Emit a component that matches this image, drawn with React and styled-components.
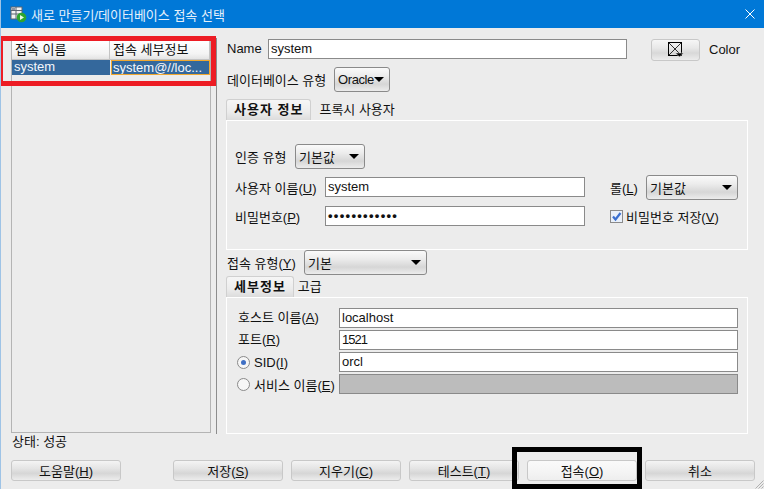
import React from "react";
import styled, { createGlobalStyle } from "styled-components";

const GlobalStyle = createGlobalStyle`
  html, body { margin: 0; padding: 0; background: #ececec; }
  body {
    font-family: "Liberation Sans", "Noto Sans CJK KR", sans-serif;
    font-size: 13px;
    color: #111;
  }
  * { box-sizing: border-box; }
`;

const Dialog = styled.div`
  position: relative;
  width: 764px;
  height: 489px;
  overflow: hidden;
  display: flex;
  flex-direction: column;
  background: #ececec;
  border-left: 1px solid #9ec3e6;
`;

const TitleBar = styled.div`
  height: 28px;
  flex: none;
  display: flex;
  align-items: center;
  background: #0078d7;
  color: #e4f0fb;
  padding: 0 9px;
`;

const TitleText = styled.span`
  flex: 1;
  margin-left: 4px;
`;

const Body = styled.div`
  flex: 1;
  display: flex;
  min-height: 0;
`;

const LeftPane = styled.div`
  width: 216px;
  flex: none;
  margin-top: 10px;
  padding: 3px 5px 0 10px;
  border-right: 1px solid #8d8d8d;
`;

const ConnTable = styled.div`
  height: 392px;
  border: 1px solid #b4b4b4;
  border-top: none;
`;

const TableRow = styled.div`
  display: grid;
  grid-template-columns: 98px 1fr;
`;

const HeadCell = styled.div`
  height: 19px;
  line-height: 18px;
  padding-left: 3px;
  background: linear-gradient(#ffffff, #f4f4f4 70%, #e4e4e4);
  border-right: 1px solid #c4c4c4;
  border-bottom: 1px solid #c4c4c4;
`;

const DataCell = styled.div`
  height: 15px;
  line-height: 14px;
  padding-left: ${({ $focused }) => ($focused ? "1px" : "2px")};
  margin-left: ${({ $focused }) => ($focused ? "1px" : "0")};
  color: #f4f7fb;
  background: #34689c;
  white-space: nowrap;
  overflow: hidden;
  border: ${({ $focused }) => ($focused ? "1px solid #f0a830" : "none")};
`;

const RightPane = styled.div`
  flex: 1;
  min-width: 0;
  padding: 11px 16px 0 9px;
  display: flex;
  flex-direction: column;
`;

const Row = styled.div`
  display: flex;
  align-items: ${({ $alignTop }) => ($alignTop ? "flex-start" : "center")};
  margin-top: ${({ $top }) => $top || 0}px;
`;

const Label = styled.span`
  flex: none;
  width: ${({ $w }) => ($w ? `${$w}px` : "auto")};
  padding-left: ${({ $pad }) => $pad || 0}px;
  padding-bottom: ${({ $lift }) => $lift || 0}px;
  line-height: ${({ $line }) => ($line ? `${$line}px` : "normal")};
  white-space: nowrap;
`;

const Key = styled.u`
  text-underline-offset: 1px;
`;

const TextField = styled.div`
  flex: none;
  width: ${({ $w }) => $w}px;
  height: 20px;
  line-height: 18px;
  padding-left: 2px;
  letter-spacing: ${({ $spacing }) => $spacing || 0}px;
  background: ${({ $disabled }) => ($disabled ? "#bcbcbc" : "#fff")};
  border: 1px solid #8a8a8a;
  white-space: nowrap;
  overflow: hidden;
`;

const Dots = styled.span`
  font-weight: 700;
  letter-spacing: 1.3px;
`;

const Select = styled.div`
  flex: none;
  width: ${({ $w }) => $w}px;
  height: 25px;
  display: flex;
  align-items: center;
  justify-content: space-between;
  padding: 0 5px 0 3px;
  letter-spacing: ${({ $spacing }) => $spacing || 0}px;
  border: 1px solid #8a8a8a;
  border-radius: 3px;
  background: linear-gradient(#fafafa, #ececec 35%, #d6d6d6 70%, #ececec);
`;

const Caret = styled.i`
  width: 0;
  height: 0;
  border-left: 5px solid transparent;
  border-right: 5px solid transparent;
  border-top: 5px solid #000;
`;

const ColorButton = styled.button`
  width: 49px;
  height: 22px;
  margin-left: 24px;
  padding: 0 0 0 1px;
  display: flex;
  align-items: center;
  justify-content: center;
  border: 1px solid #c8c8c8;
  border-radius: 3px;
  background: linear-gradient(#f6f6f6, #e8e8e8 40%, #d8d8d8 65%, #ececec);
`;

const ColorLabel = styled.span`
  margin-left: 9px;
  line-height: 22px;
`;

const TabStrip = styled.div`
  height: 21px;
  flex: none;
  display: flex;
  align-items: flex-end;
  margin-top: ${({ $top }) => $top}px;
`;

const Tab = styled.div`
  height: ${({ $active }) => ($active ? "21px" : "20px")};
  line-height: 20px;
  padding: 0 ${({ $active }) => ($active ? "7px" : 0)};
  margin-left: ${({ $gap }) => $gap || 0}px;
  letter-spacing: ${({ $active }) => ($active ? "1px" : 0)};
  font-weight: ${({ $active }) => ($active ? 700 : 400)};
  background: ${({ $active }) =>
    $active ? "linear-gradient(#f6f6f6, #ececec 60%, #dcdcdc)" : "transparent"};
  border: ${({ $active }) => ($active ? "1px solid #d0d0d0" : "none")};
  border-bottom: none;
  border-radius: 3px 3px 0 0;
  white-space: nowrap;
`;

const TabPanel = styled.div`
  border: 1px solid #fff;
  height: ${({ $h }) => ($h ? `${$h}px` : "auto")};
  flex: ${({ $h }) => ($h ? "none" : 1)};
  padding: ${({ $pad }) => $pad};
`;

const CredentialGrid = styled.div`
  display: grid;
  grid-template-columns: 90px 260px 25px 36px 92px;
  grid-template-rows: 25px 20px;
  row-gap: 6px;
  align-items: center;
  margin-top: 6px;
`;

const RowField = styled(TextField)`
  align-self: start;
  margin-top: ${({ $nudge }) => $nudge || 0}px;
`;

const CheckWrap = styled.label`
  grid-column: 4 / 6;
  display: flex;
  align-items: center;
  gap: 3px;
  white-space: nowrap;
`;

const CheckBox = styled.span`
  width: 13px;
  height: 13px;
  flex: none;
  display: flex;
  align-items: center;
  justify-content: center;
  border: 1px solid #8a8a8a;
  background: #e9f0fa;
`;

const HostGrid = styled.div`
  display: grid;
  grid-template-columns: 102px 399px;
  grid-auto-rows: 20px;
  row-gap: 2px;
  align-items: center;
`;

const RadioLabel = styled.span`
  display: flex;
  align-items: center;
  gap: 4px;
  white-space: nowrap;
`;

const Radio = styled.span`
  width: 13px;
  height: 13px;
  flex: none;
  border-radius: 50%;
  border: 1px solid #8a8a8a;
  background: #f6f6f6;
  display: flex;
  align-items: center;
  justify-content: center;
`;

const RadioDot = styled.span`
  width: 5px;
  height: 5px;
  border-radius: 50%;
  background: #3f6fc4;
`;

const Footer = styled.div`
  height: 55px;
  flex: none;
  padding: 1px 9px 0 10px;
`;

const Status = styled.div`
  height: 16px;
  line-height: 14px;
  padding-left: 1px;
`;

const ButtonRow = styled.div`
  display: flex;
  gap: 8px;
  margin-top: 9px;
`;

const ActionButton = styled.button`
  width: 110px;
  height: 21px;
  padding: 0;
  font: inherit;
  color: #111;
  margin-left: ${({ $gapLeft }) => $gapLeft || 0}px;
  border: 1px solid #c8c8c8;
  border-radius: 3px;
  background: ${({ $hot }) =>
    $hot
      ? "linear-gradient(#fafafa, #f4f4f4 60%, #eeeeee)"
      : "linear-gradient(#f4f4f4, #e4e4e4 40%, #d6d6d6 65%, #ececec)"};
`;

const Callout = styled.div`
  position: absolute;
  left: ${({ $x }) => $x}px;
  top: ${({ $y }) => $y}px;
  width: ${({ $w }) => $w}px;
  height: ${({ $h }) => $h}px;
  border: 5px solid ${({ $color }) => $color};
  border-left-width: ${({ $leftW }) => $leftW || 5}px;
  pointer-events: none;
`;

const Grip = styled.svg`
  position: absolute;
  right: 0;
  bottom: 0;
`;

const AppIcon = () => (
  <svg width="17" height="17" viewBox="0 0 17 17">
    <rect x="1" y="1" width="11" height="12" fill="#f2f2f2" stroke="#5a6470" />
    <path d="M1 4.5h11M1 8h11M6 1v12" stroke="#5a6470" />
    <rect x="2" y="2" width="3" height="2" fill="#8a95a3" />
    <circle cx="11.5" cy="11.5" r="4.8" fill="#2fa52f" />
    <path d="M10 9l4 2.5-4 2.5z" fill="#eafbe6" />
  </svg>
);

const CloseIcon = () => (
  <svg width="10" height="10" viewBox="0 0 10 10">
    <path d="M0.5 0.5l9 9M9.5 0.5l-9 9" stroke="#fff" strokeWidth="1" />
  </svg>
);

const SwatchIcon = () => (
  <svg width="17" height="16" viewBox="0 0 17 16">
    <rect x="0.5" y="0.5" width="13" height="13" fill="none" stroke="#000" />
    <path d="M1 1l12 12M13 1L1 13" stroke="#000" strokeWidth="0.8" />
    <path d="M7.5 11h8l-4 4z" fill="#000" stroke="#ececec" strokeWidth="0.5" />
  </svg>
);

const CheckMark = () => (
  <svg width="11" height="11" viewBox="0 0 11 11">
    <path d="M2 5.5l2.5 3L9.5 2" fill="none" stroke="#3a6fd0" strokeWidth="2.2" />
  </svg>
);

const App = () => (
  <Dialog>
    <GlobalStyle />
    <TitleBar>
      <AppIcon />
      <TitleText>새로 만들기/데이터베이스 접속 선택</TitleText>
      <CloseIcon />
    </TitleBar>

    <Body>
      <LeftPane>
        <ConnTable>
          <TableRow>
            <HeadCell>접속 이름</HeadCell>
            <HeadCell>접속 세부정보</HeadCell>
          </TableRow>
          <TableRow>
            <DataCell>system</DataCell>
            <DataCell $focused>system@//loc...</DataCell>
          </TableRow>
        </ConnTable>
      </LeftPane>

      <RightPane>
        <Row $alignTop>
          <Label $w={42} $pad={1} $line={20}>Name</Label>
          <TextField $w={359}>system</TextField>
          <ColorButton><SwatchIcon /></ColorButton>
          <ColorLabel>Color</ColorLabel>
        </Row>
        <Row $top={6}>
          <Label $w={108} $pad={1}>데이터베이스 유형</Label>
          <Select $w={56} $spacing={-0.4}>Oracle<Caret /></Select>
        </Row>

        <TabStrip $top={7}>
          <Tab $active>사용자 정보</Tab>
          <Tab $gap={8}>프록시 사용자</Tab>
        </TabStrip>
        <TabPanel $h={130} $pad="23px 0 0 8px">
          <Row>
            <Label $w={60}>인증 유형</Label>
            <Select $w={70}>기본값<Caret /></Select>
          </Row>
          <CredentialGrid>
            <Label>사용자 이름(<Key>U</Key>)</Label>
            <RowField $w={260} $nudge={2}>system</RowField>
            <span />
            <Label>롤(<Key>L</Key>)</Label>
            <Select $w={92}>기본값<Caret /></Select>
            <Label>비밀번호(<Key>P</Key>)</Label>
            <TextField $w={260}><Dots>••••••••••••</Dots></TextField>
            <span />
            <CheckWrap>
              <CheckBox><CheckMark /></CheckBox>
              <span>비밀번호 저장(<Key>V</Key>)</span>
            </CheckWrap>
          </CredentialGrid>
        </TabPanel>

        <Row>
          <Label $w={78} $pad={1}>접속 유형(<Key>Y</Key>)</Label>
          <Select $w={123}>기본<Caret /></Select>
        </Row>
        <TabStrip $top={1}>
          <Tab $active>세부정보</Tab>
          <Tab $gap={4}>고급</Tab>
        </TabStrip>
        <TabPanel $pad="10px 0 0 10px">
          <HostGrid>
            <Label $pad={1} $lift={3}>호스트 이름(<Key>A</Key>)</Label>
            <TextField $w={399}>localhost</TextField>
            <Label $pad={1} $lift={3}>포트(<Key>R</Key>)</Label>
            <TextField $w={399} $spacing={-1}>1521</TextField>
            <RadioLabel><Radio><RadioDot /></Radio><span>SID(<Key>I</Key>)</span></RadioLabel>
            <TextField $w={399}>orcl</TextField>
            <RadioLabel><Radio /><span>서비스 이름(<Key>E</Key>)</span></RadioLabel>
            <TextField $w={399} $disabled />
          </HostGrid>
        </TabPanel>
      </RightPane>
    </Body>

    <Footer>
      <Status>상태: 성공</Status>
      <ButtonRow>
        <ActionButton>도움말(<Key>H</Key>)</ActionButton>
        <ActionButton $gapLeft={44}>저장(<Key>S</Key>)</ActionButton>
        <ActionButton>지우기(<Key>C</Key>)</ActionButton>
        <ActionButton>테스트(<Key>T</Key>)</ActionButton>
        <ActionButton $hot>접속(<Key>O</Key>)</ActionButton>
        <ActionButton>취소</ActionButton>
      </ButtonRow>
    </Footer>

    <Callout $x={-1} $y={36} $w={216} $h={50} $color="#ed1c24" $leftW={3} />
    <Callout $x={511} $y={447} $w={130} $h={42} $color="#000" />
    <Grip width="10" height="10" viewBox="0 0 10 10">
      <path d="M9.5 1.5l-8 8M9.5 4.5l-5 5M9.5 7.5l-2 2" stroke="#b0b0b0" />
    </Grip>
  </Dialog>
);

export default App;
